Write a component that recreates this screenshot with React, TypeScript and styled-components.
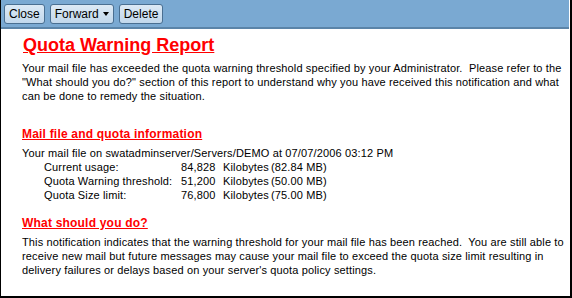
import { Fragment } from "react";
import styled, { createGlobalStyle } from "styled-components";

const GlobalStyle = createGlobalStyle`
  html, body {
    margin: 0;
    padding: 0;
    background: #ffffff;
  }
  body {
    font-family: "Liberation Sans", Arial, sans-serif;
  }
`;

const Frame = styled.div`
  width: 572px;
  height: 298px;
  box-sizing: border-box;
  border-left: 1px solid #000;
  border-right: 2px solid #000;
  border-bottom: 2px solid #000;
  background: #fff;
  overflow: hidden;
`;

const Toolbar = styled.div`
  display: flex;
  align-items: center;
  gap: 5px;
  height: 29px;
  box-sizing: border-box;
  padding: 0 4px 0 3px;
  margin-right: 1px;
  background: #7aa9d2;
  border-bottom: 2px solid #5b84a8;
`;

const ToolButton = styled.button`
  display: flex;
  align-items: center;
  gap: 4px;
  height: 20px;
  padding: 0 4px;
  font-family: "Liberation Sans", Arial, sans-serif;
  font-size: 12px;
  color: #000;
  background: linear-gradient(#dce9f5, #c2d8ec);
  border: 1px solid #4a6f91;
  border-radius: 3px;
  cursor: pointer;
`;

const Caret = styled.span`
  width: 0;
  height: 0;
  border-left: 3px solid transparent;
  border-right: 3px solid transparent;
  border-top: 4px solid #000;
`;

const Body = styled.div`
  padding: 5px 6px 0 21px;
  font-size: 11px;
  line-height: 14px;
  letter-spacing: 0.14px;
  color: #000;
`;

const Title = styled.h1`
  margin: 0 0 5px 1px;
  font-size: 18px;
  line-height: 22px;
  font-weight: bold;
  letter-spacing: 0;
  color: #ff0000;
  text-decoration: underline;
`;

const Para = styled.p`
  margin: 0;
`;

const SectionHeading = styled.h2<{ $gap: number }>`
  margin: ${(p) => p.$gap}px 0 5px 0;
  font-size: 12px;
  line-height: 14px;
  font-weight: bold;
  color: #ff0000;
  text-decoration: underline;
  letter-spacing: 0.2px;
`;

const StatsTable = styled.div`
  display: grid;
  grid-template-columns: 137px 34px 56px auto;
  grid-auto-rows: 14px;
  padding-left: 22px;
  white-space: nowrap;
`;

const Num = styled.span`
  text-align: right;
`;

const Unit = styled.span`
  padding-left: 8px;
`;

const stats = [
  { label: "Current usage:", value: "84,828", mb: "(82.84 MB)" },
  { label: "Quota Warning threshold:", value: "51,200", mb: "(50.00 MB)" },
  { label: "Quota Size limit:", value: "76,800", mb: "(75.00 MB)" },
];

export default function App() {
  return (
    <>
      <GlobalStyle />
      <Frame>
        <Toolbar>
          <ToolButton>Close</ToolButton>
          <ToolButton>
            Forward <Caret />
          </ToolButton>
          <ToolButton>Delete</ToolButton>
        </Toolbar>
        <Body>
          <Title>Quota Warning Report</Title>
          <Para>
            Your mail file has exceeded the quota warning threshold specified by your Administrator.&nbsp; Please refer to the
            "What should you do?" section of this report to understand why you have received this notification and what
            can be done to remedy the situation.
          </Para>
          <SectionHeading $gap={24}>Mail file and quota information</SectionHeading>
          <Para>Your mail file on swatadminserver/Servers/DEMO at 07/07/2006 03:12 PM</Para>
          <StatsTable>
            {stats.map((s) => (
              <Fragment key={s.label}>
                <span>{s.label}</span>
                <Num>{s.value}</Num>
                <Unit>Kilobytes</Unit>
                <span>{s.mb}</span>
              </Fragment>
            ))}
          </StatsTable>
          <SectionHeading $gap={14}>What should you do?</SectionHeading>
          <Para>
            This notification indicates that the warning threshold for your mail file has been reached.&nbsp; You are still able to
            receive new mail but future messages may cause your mail file to exceed the quota size limit resulting in
            delivery failures or delays based on your server's quota policy settings.
          </Para>
        </Body>
      </Frame>
    </>
  );
}
